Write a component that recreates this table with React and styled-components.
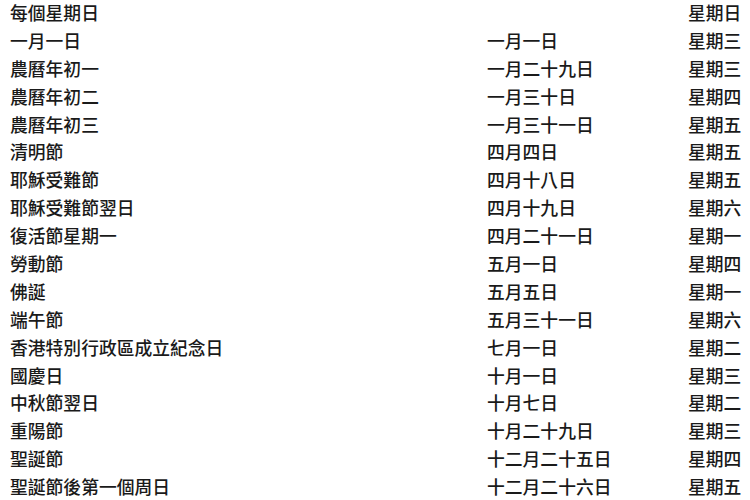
import React from "react";
import styled, { createGlobalStyle } from "styled-components";

const GlobalStyle = createGlobalStyle`
  html, body {
    margin: 0;
    padding: 0;
    background: #ffffff;
  }
`;

const Table = styled.div`
  display: grid;
  grid-template-columns: 477px 201px 1fr;
  grid-auto-rows: 27.9px;
  padding-left: 10px;
  margin-top: -1px;
  font-family: "Noto Sans CJK TC", "Noto Sans CJK SC", sans-serif;
  font-size: 17.8px;
  font-weight: 500;
  color: #1a1a1a;
  line-height: 27.9px;
  width: 750px;
  box-sizing: border-box;
`;

const Cell = styled.div`
  white-space: nowrap;
`;

const holidays = [
  ["每個星期日", "", "星期日"],
  ["一月一日", "一月一日", "星期三"],
  ["農曆年初一", "一月二十九日", "星期三"],
  ["農曆年初二", "一月三十日", "星期四"],
  ["農曆年初三", "一月三十一日", "星期五"],
  ["清明節", "四月四日", "星期五"],
  ["耶穌受難節", "四月十八日", "星期五"],
  ["耶穌受難節翌日", "四月十九日", "星期六"],
  ["復活節星期一", "四月二十一日", "星期一"],
  ["勞動節", "五月一日", "星期四"],
  ["佛誕", "五月五日", "星期一"],
  ["端午節", "五月三十一日", "星期六"],
  ["香港特別行政區成立紀念日", "七月一日", "星期二"],
  ["國慶日", "十月一日", "星期三"],
  ["中秋節翌日", "十月七日", "星期二"],
  ["重陽節", "十月二十九日", "星期三"],
  ["聖誕節", "十二月二十五日", "星期四"],
  ["聖誕節後第一個周日", "十二月二十六日", "星期五"],
];

export default function App() {
  return (
    <>
      <GlobalStyle />
      <Table>
        {holidays.map(([name, date, day]) => (
          <React.Fragment key={name}>
            <Cell>{name}</Cell>
            <Cell>{date}</Cell>
            <Cell>{day}</Cell>
          </React.Fragment>
        ))}
      </Table>
    </>
  );
}
